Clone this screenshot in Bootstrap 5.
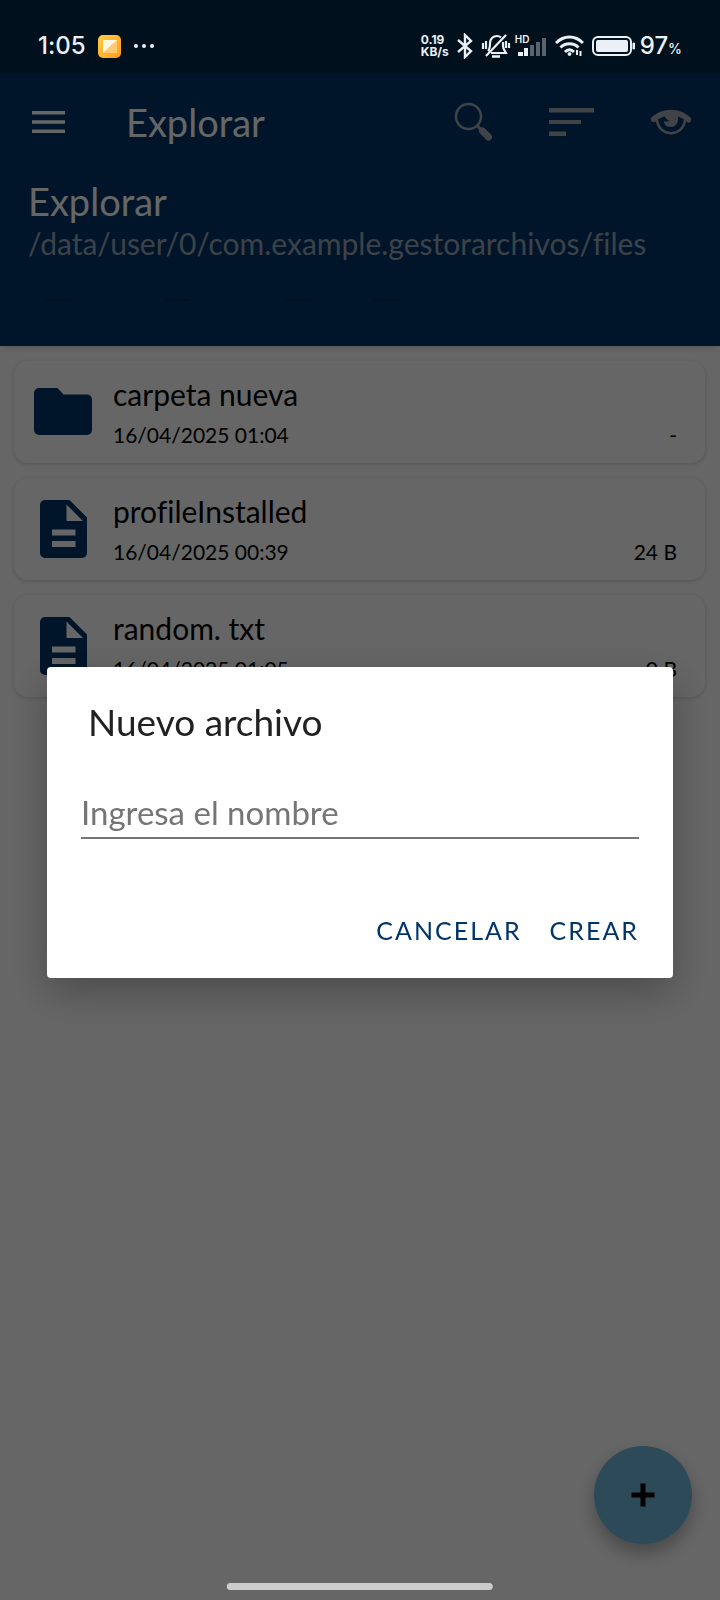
<!DOCTYPE html>
<html lang="es">
<head>
<meta charset="utf-8">
<meta name="viewport" content="width=device-width, initial-scale=1">
<title>Explorar</title>
<link href="https://cdn.jsdelivr.net/npm/bootstrap@5.3.0/dist/css/bootstrap.min.css" rel="stylesheet">
<style>
  :root { --navy: #00356a; }
  body { font-family: Lato, "Noto Sans", sans-serif; background: #fff; color: #000; font-variant-ligatures: none; }
  svg { display: block; flex: none; }
  .status-bar { background: #00101c; color: #eaf0f5; z-index: 1070; height: 73px; padding: 32px 38px 0 38px; font-size: 24px; line-height: 28px; font-family: Inter, sans-serif; font-weight: 500; }
  .net-speed { font-size: 12px; line-height: 12px; font-weight: 700; }
  .pct { font-size: 14px; line-height: 16px; }
  .signal { font-size: 10px; line-height: 10px; width: 32px; height: 24px; font-weight: 600; }
  .signal svg { position: absolute; left: 3px; top: 4px; }
  .app-header { background: var(--navy); color: #fff; height: 273px; box-shadow: 0 2px 6px rgba(0,0,0,.15); position: relative; }
  .toolbar { height: 98px; padding: 0 28px 0 32px; }
  .toolbar-title { font-size: 38px; line-height: 44px; margin-left: 60px; }
  .tool-actions { gap: 55px; }
  .tool-actions .btn { color: #a0a8b3; }
  .place { padding: 8px 28px 0; }
  .place h2 { font-size: 38px; line-height: 44px; }
  .place p { font-size: 30px; line-height: 40px; color: #99a5b3; }
  .tab-strip { padding: 36px 44px 0; gap: 94px; }
  .tab-strip span { width: 26px; height: 2px; background: #002a54; }
  .tab-strip span:last-child { margin-left: -30px; }
  .file-list { padding: 15px 15px 0 14px; gap: 15px; }
  .file-card { height: 102px; border: 0; border-radius: 14px; padding: 0 28px 0 19px; box-shadow: 0 1px 4px rgba(0,0,0,.18); color: #000; }
  .file-icon { width: 60px; color: var(--navy); }
  .file-name { font-size: 30px; line-height: 40px; margin-bottom: 6px; }
  .file-meta { font-size: 21px; line-height: 30px; }
  .fab { width: 98px; height: 98px; right: 28px; bottom: 56px; background: #71b8dd; box-shadow: 0 9px 18px rgba(0,0,0,.3); }
  .fab:hover { background: #71b8dd; }
  .modal-backdrop { --bs-backdrop-opacity: .6; }
  .modal { padding-top: 44px; }
  .modal-dialog { max-width: none; margin: 0 47px; min-height: 100%; }
  .modal-content { border: 0; border-radius: 4px; box-shadow: 0 14px 40px rgba(0,0,0,.28); padding: 33px 34px 28px 34px; }
  .modal-title { font-size: 37px; line-height: 44px; font-weight: 400; color: #212121; padding-left: 7px; }
  .name-input { margin-top: 46px; padding: 0 0 3px; font-size: 33px; line-height: 44px; border: 0; border-bottom: 2px solid #757575; border-radius: 0; }
  .name-input, .name-input:focus { box-shadow: none; background: transparent; }
  .name-input::placeholder { color: #757575; }
  .dialog-actions { margin-top: 71px; gap: 28px; }
  .dialog-actions .btn { padding: 0; border: 0; color: var(--navy); font-size: 25px; line-height: 40px; letter-spacing: 2px; }
  .home-bar { width: 37%; height: 7px; bottom: 10px; background: #ccc; z-index: 1070; }
</style>
</head>
<body class="min-vh-100">

<div class="status-bar position-relative d-flex justify-content-between">
  <div class="d-flex align-items-center align-self-start">
    <span>1:05</span>
    <svg class="ms-2 me-2" width="30" height="24" viewBox="-4 0 30 24">
      <defs><linearGradient id="note" x1="0" y1="0" x2="1" y2="1"><stop offset="0" stop-color="#ffce45"/><stop offset="1" stop-color="#ff9d1c"/></linearGradient></defs>
      <rect width="23" height="23" y="1" rx="5" fill="url(#note)"/>
      <path d="M5 6h14v13H5z" fill="#ffc873"/><path d="M5 6h14L5 19z" fill="#fff7e2"/>
    </svg>
    <svg width="24" height="6" viewBox="0 0 24 6" fill="currentColor"><circle cx="4" cy="3" r="2"/><circle cx="12" cy="3" r="2"/><circle cx="20" cy="3" r="2"/></svg>
  </div>
  <div class="d-flex align-items-center align-self-start">
    <div class="net-speed">0.19<br>KB/s</div>
    <svg class="ms-2" width="16" height="26" viewBox="0 0 16 26" fill="none" stroke="currentColor" stroke-width="2.400"><path d="M1 7l13 11-6 6V2l6 6L1 19"/></svg>
    <svg class="ms-2" width="30" height="26" viewBox="0 0 30 26" fill="none" stroke="currentColor" stroke-width="2.200"><path d="M7 18c2-2 2-4 2-8 0-4 3-7 7-7 2 0 3 .5 4 1.500M22 9v4c0 3 2 5 3 7H10M5 23L25 2M2 10v6M5 8v8M25 8v7M28 10v5"/><path d="M11 23.500h8" stroke-width="2.600"/></svg>
    <div class="signal position-relative ms-1">HD
      <svg width="28" height="18" viewBox="0 0 28 18"><g fill="currentColor"><rect y="14" width="5" height="4"/><rect x="6" y="10" width="4" height="8"/></g><g fill="#59636c"><rect x="12" y="7" width="4" height="11"/><rect x="18" y="4" width="4" height="14"/><rect x="24" width="4" height="18"/></g></svg>
    </div>
    <svg class="ms-2" width="29" height="22" viewBox="0 0 29 22" fill="none" stroke="currentColor" stroke-width="3"><path d="M1 8c8-8 19-8 27 0M5.500 12.500c5-5 13-5 18 0M10 17c3-3 6-3 9 0"/><circle cx="14.500" cy="19" r="1.500" fill="currentColor" stroke-width="1"/><path d="M22 15v5M25.500 16v5" stroke-width="2"/></svg>
    <svg class="ms-2" width="44" height="20" viewBox="0 0 44 20"><rect x="1" y="1" width="38" height="18" rx="5" fill="none" stroke="currentColor" stroke-width="2"/><rect x="4" y="4" width="32" height="12" rx="2" fill="currentColor"/><path d="M41 7h1.500v6H41z" fill="currentColor" stroke="currentColor"/></svg>
    <div class="ms-1 d-flex align-items-baseline"><span>97</span><span class="pct">%</span></div>
  </div>
</div>

<header class="app-header">
  <div class="toolbar d-flex align-items-center">
    <button class="btn p-0 border-0 text-white" type="button" aria-label="Menú">
      <svg width="34" height="24" viewBox="0 0 34 24" fill="currentColor"><path d="M0 1h33v3.500H0zM0 10.250h33v3.500H0zM0 19.500h33V23H0z"/></svg>
    </button>
    <h1 class="toolbar-title fw-normal mb-0">Explorar</h1>
    <div class="tool-actions d-flex align-items-center ms-auto">
      <button class="btn p-0 border-0" type="button" aria-label="Buscar">
        <svg width="40" height="40" viewBox="0 0 40 40" fill="none" stroke="currentColor"><circle cx="14.500" cy="14.500" r="12.500" stroke-width="2.500"/><path d="M23.500 24l4 4" stroke-width="3"/><path d="M28.500 29l6 6" stroke-width="7" stroke-linecap="round"/></svg>
      </button>
      <button class="btn p-0 border-0" type="button" aria-label="Ordenar">
        <svg width="46" height="28" viewBox="0 0 46 28" fill="currentColor"><path d="M0 0h45v4.500H0zM0 12h32v4H0zM0 23.500h17V28H0z"/></svg>
      </button>
      <button class="btn p-0 border-0" type="button" aria-label="Mostrar ocultos">
        <svg width="42" height="26" viewBox="0 0 42 26" fill="none" stroke="currentColor"><path d="M1 9C12-2 30-2 41 9c1 3-2 6-4 4C27 4 15 4 5 13c-2 1-5-1-4-4z" fill="currentColor" stroke="none"/><path d="M7 11c2 17.500 26 17.500 28 0" stroke-width="2.500"/><path d="M14 5h13c3 6 0 13-6 13-5 0-7-3-7-6 2 1 4 1 5-1-2 0-4-2-5-6z" fill="currentColor" stroke="none"/></svg>
      </button>
    </div>
  </div>
  <div class="place">
    <h2 class="fw-normal mb-0">Explorar</h2>
    <p class="mb-0">/data/user/0/com.example.gestorarchivos/files</p>
  </div>
  <div class="tab-strip d-flex"><span></span><span></span><span></span><span></span></div>
</header>

<main class="file-list d-flex flex-column">
  <article class="file-card card flex-row align-items-center">
    <div class="file-icon d-flex justify-content-center"><svg width="58" height="48" viewBox="0 0 58 48" fill="currentColor"><path d="M5 0h18.500l6 6.500H53a5 5 0 0 1 5 5V42a5 5 0 0 1-5 5H5a5 5 0 0 1-5-5V5a5 5 0 0 1 5-5z"/></svg></div>
    <div class="flex-grow-1 ms-3 ps-1"><div class="file-name">carpeta nueva</div><div class="file-meta d-flex justify-content-between"><span>16/04/2025 01:04</span><span>-</span></div></div>
  </article>
  <article class="file-card card flex-row align-items-center">
    <div class="file-icon d-flex justify-content-center"><svg width="47" height="58" viewBox="0 0 47 58" fill="currentColor" fill-rule="evenodd"><path d="M5 0h24.500L47 17.500V53a5 5 0 0 1-5 5H5a5 5 0 0 1-5-5V5a5 5 0 0 1 5-5zM26.500 4.500v16.500H43zM12 29.500h23.500v6H12zM12 41h23.500v6H12z"/></svg></div>
    <div class="flex-grow-1 ms-3 ps-1"><div class="file-name">profileInstalled</div><div class="file-meta d-flex justify-content-between"><span>16/04/2025 00:39</span><span>24 B</span></div></div>
  </article>
  <article class="file-card card flex-row align-items-center">
    <div class="file-icon d-flex justify-content-center"><svg width="47" height="58" viewBox="0 0 47 58" fill="currentColor" fill-rule="evenodd"><path d="M5 0h24.500L47 17.500V53a5 5 0 0 1-5 5H5a5 5 0 0 1-5-5V5a5 5 0 0 1 5-5zM26.500 4.500v16.500H43zM12 29.500h23.500v6H12zM12 41h23.500v6H12z"/></svg></div>
    <div class="flex-grow-1 ms-3 ps-1"><div class="file-name">random. txt</div><div class="file-meta d-flex justify-content-between"><span>16/04/2025 01:05</span><span>0 B</span></div></div>
  </article>
</main>

<button class="fab btn rounded-circle border-0 position-fixed d-flex align-items-center justify-content-center" type="button" aria-label="Nuevo">
  <svg width="24" height="24" viewBox="0 0 24 24" stroke="#000" stroke-width="5" stroke-linecap="square"><path d="M12 3v18M3 12h18"/></svg>
</button>

<div class="modal-backdrop show"></div>
<div class="modal show d-block" tabindex="-1" role="dialog" aria-modal="true" aria-labelledby="dialogTitle">
  <div class="modal-dialog modal-dialog-centered">
    <form class="modal-content">
      <h2 class="modal-title" id="dialogTitle">Nuevo archivo</h2>
      <input class="name-input form-control" type="text" placeholder="Ingresa el nombre" aria-label="Ingresa el nombre">
      <div class="dialog-actions d-flex justify-content-end">
        <button class="btn" type="button">CANCELAR</button>
        <button class="btn" type="button">CREAR</button>
      </div>
    </form>
  </div>
</div>
<div class="home-bar rounded-pill position-fixed start-50 translate-middle-x"></div>

<script src="https://cdn.jsdelivr.net/npm/bootstrap@5.3.0/dist/js/bootstrap.bundle.min.js"></script>
</body>
</html>
